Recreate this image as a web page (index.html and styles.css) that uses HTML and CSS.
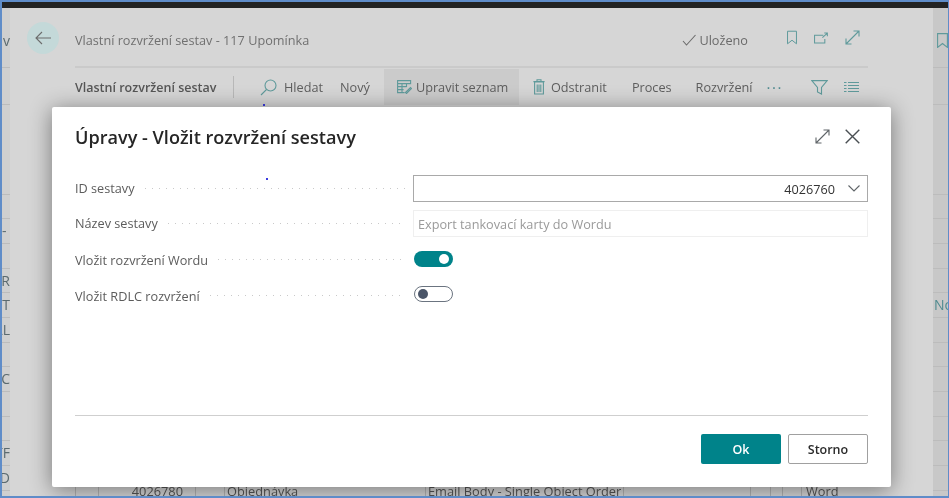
FILE: index.html
```html
<!DOCTYPE html>
<html lang="cs">
<head>
<meta charset="utf-8">
<title>Úpravy - Vložit rozvržení sestavy</title>
<link rel="stylesheet" href="styles.css">
</head>
<body>
<div class="frame">
  <div class="blackbar"></div>
  <div class="stage">
    <aside class="strip strip-left">
      <div class="cell c-top"><span class="edge-text edge-v">v,</span></div>
      <div class="cell c-mid"></div>
      <div class="cell c-big"></div>
      <div class="cell"></div>
      <div class="cell">-</div>
      <div class="cell"></div>
      <div class="cell">TR</div>
      <div class="cell">OT</div>
      <div class="cell">AL</div>
      <div class="cell"></div>
      <div class="cell">AC</div>
      <div class="cell"></div>
      <div class="cell"></div>
      <div class="cell">TF</div>
      <div class="cell">D</div>
    </aside>

    <main class="page">
      <div class="back-col">
        <div class="back">
          <svg width="16" height="14" viewBox="0 0 16 14"><path d="M7 1 1 7l6 6M1 7h15" class="ink-dark"/></svg>
        </div>
      </div>
      <div class="content">
        <header class="pagehead">
          <span class="pagetitle">Vlastní rozvržení sestav - 117 Upomínka</span>
          <span class="saved">
            <svg width="14" height="12" viewBox="0 0 14 12"><path d="M1 7l3.500 4L13.500 1" class="ink-dark"/></svg>
            Uloženo
          </span>
          <span class="headicons">
            <svg width="10" height="15" viewBox="0 0 11 15"><path d="M.6.6h9.800v13.800L5.500 10.500.6 14.400z" class="ink-teal"/></svg>
            <svg width="14" height="12" viewBox="0 0 15 12"><path d="M10 3H.6v8.400h11V7M9 5.500l5-4.500M11 .7h3.300V4" class="ink-teal"/></svg>
            <svg width="15" height="15" viewBox="0 0 15 15"><path d="M1 14 14 1M8.500 1H14v5.500M1 8.500V14h5.500" class="ink-teal"/></svg>
          </span>
        </header>
        <nav class="toolbar">
          <strong class="tool-name">Vlastní rozvržení sestav</strong>
          <span class="tool-div"></span>
          <span class="tool t-search">
            <svg width="17" height="17" viewBox="0 0 17 17"><circle cx="10.500" cy="6.500" r="5.500" class="ink-teal"/><path d="M6.500 10.500 1 16" class="ink-teal"/></svg>
            Hledat
          </span>
          <span class="tool t-new">Nový</span>
          <span class="tool t-edit">
            <svg width="15" height="14" viewBox="0 0 15 14"><path d="M.6.6h13v3H.6zM.6 3.600v9h7M5 3.600v9M9.500 3.600V7M.6 6.600h9M.6 9.600h6M8.500 12.500l5-5 1 1-5 5z" class="ink-teal"/></svg>
            Upravit seznam
          </span>
          <span class="tool t-del">
            <svg width="12" height="16" viewBox="0 0 12 16"><path d="M1.600 3v12h8.800V3zM.4 2.600h11.200M4 2.500V.7h4v1.800M4.200 5.500v7.500M6 5.500v7.500M7.800 5.500v7.500" class="ink-teal"/></svg>
            Odstranit
          </span>
          <span class="tool t-proc">Proces</span>
          <span class="tool t-lay">Rozvržení</span>
          <span class="tool t-more">···</span>
          <span class="tool-right">
            <svg width="17" height="15" viewBox="0 0 17 15"><path d="M.8.6h15.400L10.500 7.500v6.500l-4-2V7.500z" class="ink-teal"/></svg>
            <svg width="15" height="12" viewBox="0 0 15 12"><path d="M0 1.500h2.500M4 1.500h11M0 4.500h2.500M4 4.500h11M0 7.500h2.500M4 7.500h11M0 10.500h2.500M4 10.500h11" class="ink-teal"/></svg>
          </span>
        </nav>
        <div class="grow"></div>
        <div class="row-behind">
          <span class="rb w23"></span>
          <span class="rb w97 num">4026780</span>
          <span class="rb w29"></span>
          <span class="rb w201">Objednávka</span>
          <span class="rb w198">Email Body - Single Object Order</span>
          <span class="rb w127"></span>
          <span class="rb w20"></span>
          <span class="rb w12"></span>
          <span class="rb w19"></span>
          <span class="rb w67">Word</span>
        </div>
      </div>
    </main>

    <aside class="strip strip-right">
      <div class="cell c-top">
        <svg class="edge-mark" width="11" height="15" viewBox="0 0 11 15"><path d="M.6.6h9.800v13.800L5.500 10.500.6 14.400z" class="ink-teal"/></svg>
      </div>
      <div class="cell c-mid"></div>
      <div class="cell c-big"></div>
      <div class="cell"></div>
      <div class="cell"></div>
      <div class="cell"></div>
      <div class="cell"></div>
      <div class="cell link">No</div>
      <div class="cell"></div>
      <div class="cell"></div>
      <div class="cell"></div>
      <div class="cell"></div>
      <div class="cell"></div>
      <div class="cell"></div>
      <div class="cell"></div>
    </aside>
  </div>

  <span class="speck speck-a"></span>

  <section class="modal">
    <span class="speck speck-b"></span>
    <header class="modal-head">
      <h1 class="modal-title">Úpravy - Vložit rozvržení sestavy</h1>
      <span class="modal-icons">
        <svg width="15" height="15" viewBox="0 0 15 15"><path d="M1 14 14 1M8.500 1H14v5.500M1 8.500V14h5.500" class="ink-grey"/></svg>
        <svg width="15" height="15" viewBox="0 0 15 15"><path d="M.7.7l13.600 13.600M14.300.7.700 14.300" class="ink-close"/></svg>
      </span>
    </header>
    <div class="form">
      <div class="field">
        <span class="label">ID sestavy</span><span class="leader"></span>
        <div class="input input-edit">
          <span>4026760</span>
          <svg width="12" height="7" viewBox="0 0 12 7"><path d="M.5.5 6 6 11.500.5" class="ink-grey"/></svg>
        </div>
      </div>
      <div class="field">
        <span class="label">Název sestavy</span><span class="leader"></span>
        <div class="input input-ro">Export tankovací karty do Wordu</div>
      </div>
      <div class="field field-switch">
        <span class="label">Vložit rozvržení Wordu</span><span class="leader"></span>
        <div class="control"><span class="toggle toggle-on"><i class="thumb"></i></span></div>
      </div>
      <div class="field field-switch">
        <span class="label">Vložit RDLC rozvržení</span><span class="leader"></span>
        <div class="control"><span class="toggle toggle-off"><i class="thumb"></i></span></div>
      </div>
    </div>
    <div class="grow"></div>
    <footer class="modal-foot">
      <button class="btn btn-ok" type="button">Ok</button>
      <button class="btn btn-cancel" type="button">Storno</button>
    </footer>
  </section>
</div>
</body>
</html>
```
FILE: styles.css
```css
* { box-sizing: border-box; }
html, body { margin: 0; padding: 0; background: #fff; }
body { font-family: "Open Sans", "Noto Sans", "Liberation Sans", sans-serif; font-size: 12.700px; color: #5e5e5e; }

svg { display: block; flex: none; }
svg path, svg circle { fill: none; stroke-width: 1.100; }
.ink-teal { stroke: #5f9a9b; }
.ink-dark { stroke: #6c6c6c; }
.ink-grey { stroke: #5f6468; }
svg .ink-close { stroke: #4a4f53; stroke-width: 1.400; }

.frame {
  position: relative;
  width: 949px;
  height: 498px;
  overflow: hidden;
  border: 2px solid #5f8cc8;
  border-right-width: 1px;
  display: flex;
  flex-direction: column;
  background: #d6d6d6;
  filter: blur(.3px);
}
.blackbar { flex: none; height: 6px; background: #232323; }
.stage { flex: 1; display: flex; min-height: 0; }

.strip { flex: none; overflow: hidden; display: flex; flex-direction: column; background: #cfcfcf; color: #5b6a6f; font-size: 14px; }
.strip-left { width: 8px; }
.strip-right { width: 15px; background: #c8c8c8; }
.cell { flex: none; height: 24.700px; border-bottom: 1px solid #bcbcbc; line-height: 24px; white-space: nowrap; }
.strip-left .cell { direction: rtl; text-align: left; }
.c-top { height: 59.500px; }
.c-mid { height: 37px; }
.c-big { height: 90px; }
.edge-text { display: block; padding-top: 21px; }
.edge-mark { margin: 25px 0 0 4px; }
.link { color: #4f8b90; padding-left: 1px; }

.page { flex: 1; min-width: 0; display: flex; }
.back-col { flex: none; width: 65px; padding: 14px 0 0 17px; }
.back { width: 32px; height: 32px; border-radius: 50%; background: #c4d9d9; display: flex; align-items: center; justify-content: center; }
.content { width: 793px; display: flex; flex-direction: column; }
.grow { flex: 1; }

.pagehead { flex: none; height: 60px; border-bottom: 2px solid #cacaca; display: flex; align-items: center; padding-top: 5px; }
.pagetitle { flex: 1; color: #707070; }
.saved { display: flex; align-items: center; gap: 3px; color: #6a6a6a; }
.headicons { display: flex; align-items: center; gap: 17px; margin: -4px 8px 0 39px; }

.toolbar { flex: none; height: 38px; display: flex; align-items: center; }
.tool-name { font-weight: 600; font-size: 12.500px; color: #565656; width: 158px; }
.tool-div { width: 1px; height: 22px; background: #b8b8b8; }
.tool { display: flex; align-items: center; height: 36px; white-space: nowrap; }
.t-search { margin-left: 26px; gap: 7px; }
.t-new { margin-left: 17px; }
.t-edit { margin-left: 14px; width: 135px; padding-left: 13px; gap: 4px; background: #cbcbcb; }
.t-del { margin-left: 14px; gap: 6px; }
.t-proc { margin-left: 25px; }
.t-lay { margin-left: 24px; }
.t-more { margin-left: 14px; color: #4f8b90; font-size: 15px; letter-spacing: 1.500px; }
.tool-right { margin: 0 9px 0 auto; display: flex; align-items: center; gap: 16px; }

.row-behind { flex: none; height: 15px; display: flex; overflow: hidden; color: #555; font-size: 12.800px; line-height: 20px; }
.rb { flex: none; border-left: 1px solid #b4b4b4; padding-left: 2px; white-space: nowrap; overflow: hidden; }
.num { text-align: right; padding-right: 12px; }
.w23 { width: 23px; } .w97 { width: 97px; } .w29 { width: 29px; } .w201 { width: 201px; }
.w198 { width: 198px; } .w127 { width: 127px; } .w20 { width: 20px; } .w12 { width: 12px; }
.w19 { width: 19px; } .w67 { width: 67px; padding-left: 4px; }

.speck { position: absolute; width: 2px; height: 2px; background: #3a3ae0; }
.speck-a { left: 261px; top: 102px; }
.speck-b { left: 214px; top: 71px; }

.modal {
  position: absolute;
  left: 50px;
  top: 105px;
  width: 839px;
  height: 380px;
  padding: 0 23px 23px;
  display: flex;
  flex-direction: column;
  background: #fff;
  border-radius: 2px;
  box-shadow: 0 3px 22px rgba(0, 0, 0, .45);
}
.modal-head { flex: none; height: 68px; display: flex; align-items: flex-start; justify-content: space-between; padding-top: 18px; }
.modal-title { margin: 0; font-size: 18.100px; line-height: 24px; font-weight: 600; color: #262626; }
.modal-icons { display: flex; gap: 15px; margin: 4px 8px 0 0; }

.form { flex: none; display: flex; flex-direction: column; }
.field { height: 35.200px; display: flex; align-items: flex-start; }
.label { flex: none; line-height: 27px; color: #5c5c5c; }
.leader {
  flex: 1;
  height: 3px;
  margin: 12px 8px 0 7px;
  background: radial-gradient(circle, #c9c9c9 .8px, transparent 1px) 0 0 / 7px 3px repeat-x;
}
.field-switch .label { line-height: 30px; }
.field-switch .leader { margin-top: 13px; }
.input { flex: none; width: 455px; height: 27px; display: flex; align-items: center; }
.input-edit { border: 1px solid #a9a9a9; justify-content: flex-end; gap: 13px; padding-right: 7px; color: #333; }
.input-ro { border: 1px solid #efefef; padding-left: 4px; color: #9a9a9a; }
.control { flex: none; width: 455px; height: 24px; padding-top: 5.500px; }

.toggle { display: flex; align-items: center; width: 39px; height: 16px; margin-left: 1px; border-radius: 8px; }
.thumb { display: block; width: 10px; height: 10px; border-radius: 50%; }
.toggle-on { background: #00838a; justify-content: flex-end; padding-right: 4px; }
.toggle-on .thumb { background: #fff; }
.toggle-off { border: 1.500px solid #6b7480; padding-left: 3px; }
.toggle-off .thumb { background: #4a5568; }

.modal-foot { flex: none; height: 49px; border-top: 1px solid #cfcfcf; display: flex; justify-content: flex-end; align-items: flex-end; gap: 7px; }
.btn { width: 80px; height: 30px; border-radius: 2px; font: 600 12.500px "Open Sans", "Noto Sans", sans-serif; cursor: pointer; }
.btn-ok { background: #00838a; border: 0; color: #fff; }
.btn-cancel { background: #fff; border: 1px solid #a0a0a0; color: #2b2b2b; }
```
